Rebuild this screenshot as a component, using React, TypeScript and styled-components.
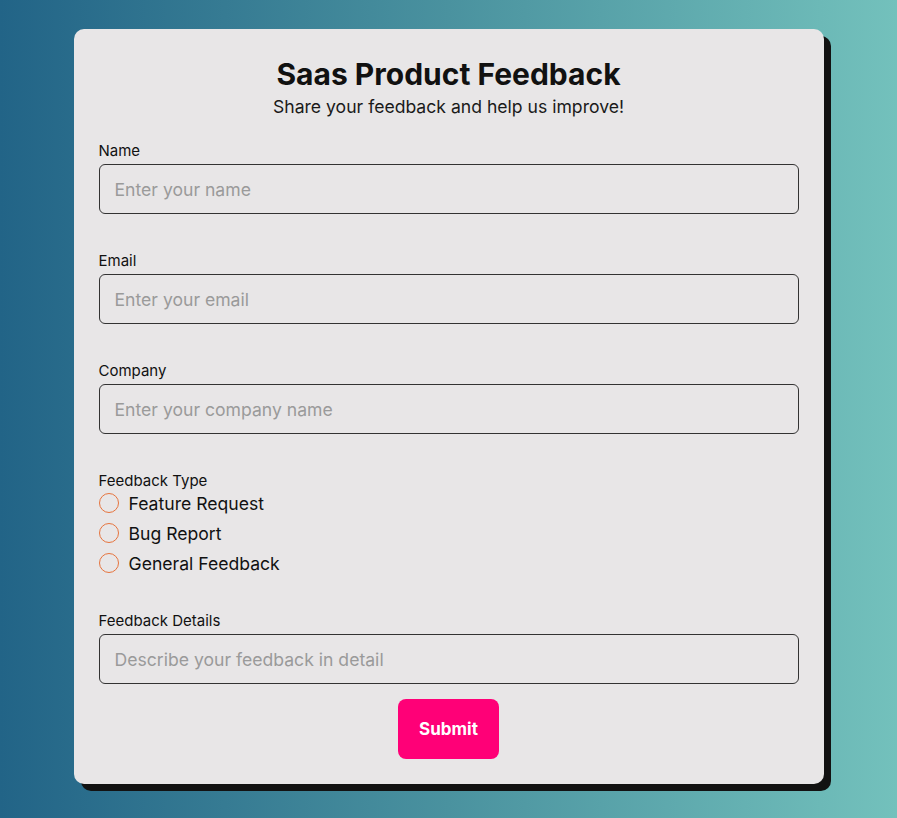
import React from "react";
import styled, { createGlobalStyle } from "styled-components";

const GlobalStyle = createGlobalStyle`
  html, body {
    margin: 0;
    padding: 0;
  }
  body {
    font-family: Inter, "Noto Sans", sans-serif;
    background: linear-gradient(to right, #226487 0%, #4a929f 50%, #73c1bc 100%);
    min-height: 818px;
  }
`;

const options = ["Feature Request", "Bug Report", "General Feedback"];

export default function App() {
  return (
    <>
      <GlobalStyle />
      <Page>
        <Card>
          <Header>
            <Title>Saas Product Feedback</Title>
            <Subtitle>Share your feedback and help us improve!</Subtitle>
          </Header>

          <Field>
            <Label>Name</Label>
            <Input placeholder="Enter your name" />
          </Field>
          <Field>
            <Label>Email</Label>
            <Input placeholder="Enter your email" />
          </Field>
          <Field>
            <Label>Company</Label>
            <Input placeholder="Enter your company name" />
          </Field>

          <RadioGroup>
            <GroupLabel>Feedback Type</GroupLabel>
            {options.map((o) => (
              <RadioRow key={o}>
                <Radio type="radio" name="type" />
                <span>{o}</span>
              </RadioRow>
            ))}
          </RadioGroup>

          <Field $last>
            <Label>Feedback Details</Label>
            <Input placeholder="Describe your feedback in detail" />
          </Field>

          <Submit>Submit</Submit>
        </Card>
      </Page>
    </>
  );
}

const Page = styled.div`
  display: flex;
  justify-content: center;
  padding-top: 29px;
  min-height: 818px;
  box-sizing: border-box;
`;

const Card = styled.form`
  width: 750px;
  box-sizing: border-box;
  padding: 26px 25px 25px 25px;
  background: #e8e6e7;
  border-radius: 10px;
  box-shadow: 7px 7px 0 #121212;
  display: flex;
  flex-direction: column;
  align-self: flex-start;
`;

const Header = styled.div`
  text-align: center;
  margin-bottom: 23px;
`;

const Title = styled.h1`
  margin: 0;
  font-size: 30px;
  font-weight: 700;
  line-height: 38px;
  color: #111;
`;

const Subtitle = styled.p`
  margin: 2px 0 0;
  font-size: 17.6px;
  line-height: 24px;
  color: #1a1a1a;
`;

const Field = styled.div<{ $last?: boolean }>`
  display: flex;
  flex-direction: column;
  margin-bottom: ${(p) => (p.$last ? "15px" : "38px")};
`;

const Label = styled.label`
  font-size: 15px;
  line-height: 17px;
  color: #111;
  margin-bottom: 5px;
`;

const GroupLabel = styled.span`
  font-size: 15px;
  line-height: 17px;
  color: #111;
  margin-bottom: -1px;
`;

const Input = styled.input`
  height: 50px;
  box-sizing: border-box;
  border: 1px solid #333;
  border-radius: 6px;
  background: transparent;
  padding: 0 15px;
  font-family: Inter, "Noto Sans", sans-serif;
  font-size: 17.6px;
  color: #111;
  outline: none;
  &::placeholder {
    color: #9a9a9a;
  }
`;

const RadioGroup = styled.div`
  display: flex;
  flex-direction: column;
  margin-bottom: 34px;
`;

const RadioRow = styled.label`
  display: flex;
  align-items: center;
  gap: 10px;
  height: 30px;
  font-size: 17.6px;
  color: #111;
`;

const Radio = styled.input`
  appearance: none;
  margin: 0;
  width: 20px;
  height: 20px;
  border: 1.6px solid #e6743e;
  border-radius: 50%;
  box-sizing: border-box;
  background: transparent;
`;

const Submit = styled.button`
  align-self: center;
  width: 101px;
  height: 60px;
  border: none;
  border-radius: 8px;
  background: #ff0077;
  color: #fff;
  font-family: Inter, "Noto Sans", sans-serif;
  font-size: 17px;
  font-weight: 700;
  cursor: pointer;
`;
